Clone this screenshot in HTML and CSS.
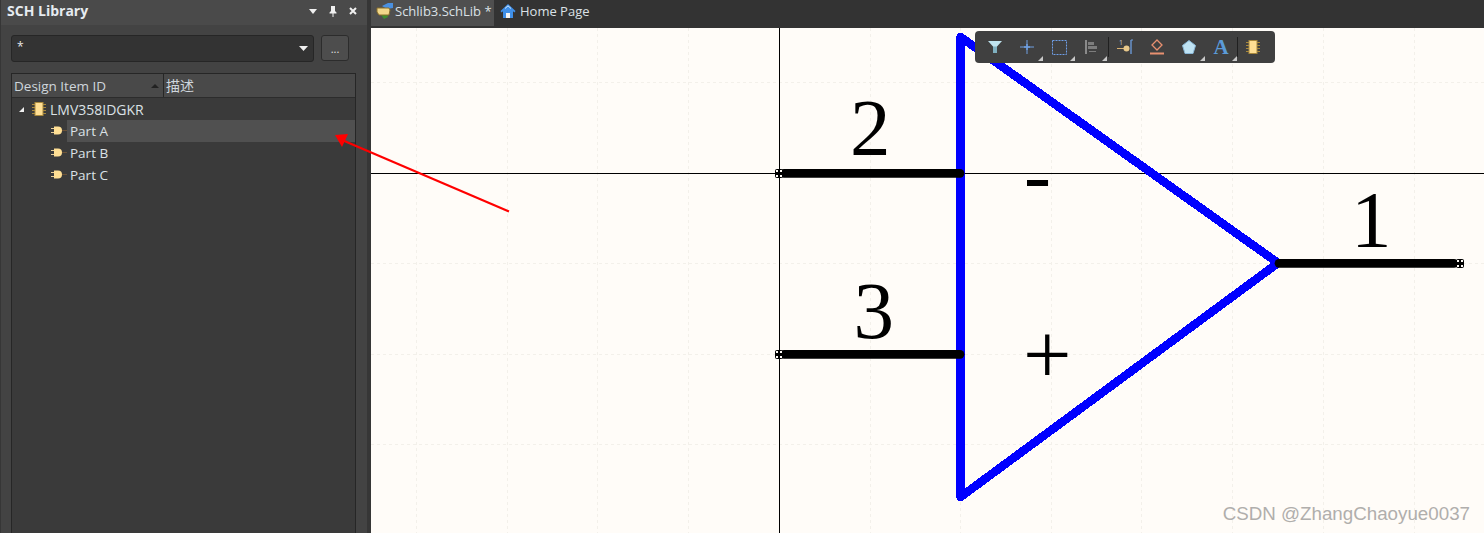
FILE: index.html
```html
<!DOCTYPE html>
<html lang="en">
  <head>
    <meta charset="UTF-8" />
    <title>Schlib3.SchLib</title>
    <link rel="stylesheet" href="styles.css">
  </head>
  <body>
    <div class="app">
      <div class="panel">
        <div class="panel-head">
          <span class="panel-title">SCH Library</span>
          <div class="panel-btns">
            <svg width="10" height="10" viewBox="0 0 10 10"><path d="M1 3h8L5 8z" fill="#f0f0f0"/></svg>
            <svg width="10" height="12" viewBox="0 0 10 12"><path d="M3 1h4v5l1.500 1.500v1H5.500V12h-1V8.500H1.500v-1L3 6z" fill="#f0f0f0"/></svg>
            <svg width="10" height="10" viewBox="0 0 10 10"><path d="M2 2l6 6M8 2L2 8" stroke="#f0f0f0" stroke-width="2"/></svg>
          </div>
        </div>
        <div class="panel-body">
          <div class="filter-row">
            <div class="filter">
              <span>*</span>
              <svg width="10" height="6" viewBox="0 0 10 6"><path d="M0 0h9L4.500 5z" fill="#f0f0f0"/></svg>
            </div>
            <div class="more">...</div>
          </div>
          <div class="tree">
            <div class="tree-head">
              <div class="col-id">
                <span>Design Item ID</span>
                <svg width="9" height="5" viewBox="0 0 9 5"><path d="M0 5h8L4 1z" fill="#222"/></svg>
              </div>
              <div class="col-desc">描述</div>
            </div>
            <div class="row row-top">
              <svg class="twist" width="7" height="7" viewBox="0 0 7 7"><path d="M6 1v5H1z" fill="#f0f0f0"/></svg>
              <svg class="chip" width="14" height="14" viewBox="0 0 14 14">
                <path d="M0 2.500h14M0 5.500h14M0 8.500h14M0 11.500h14" stroke="#a8883c"/>
                <rect x="3" y="0.500" width="8" height="13" fill="#ffdf94" stroke="#a8883c"/>
              </svg>
              <span>LMV358IDGKR</span>
            </div>
            <div class="row row-part">
              <svg class="gate" width="16" height="9" viewBox="0 0 16 9">
                <path d="M0 2.500h3M0 6.500h3" stroke="#e8cf98"/>
                <path d="M11 4.500h5" stroke="#6a5238"/>
                <path d="M3 0.500h4a4 4 0 0 1 0 8H3z" fill="#ffdf94"/>
              </svg>
              <span class="part-name sel">Part A</span>
            </div>
            <div class="row row-part">
              <svg class="gate" width="16" height="9" viewBox="0 0 16 9">
                <path d="M0 2.500h3M0 6.500h3" stroke="#e8cf98"/>
                <path d="M11 4.500h5" stroke="#6a5238"/>
                <path d="M3 0.500h4a4 4 0 0 1 0 8H3z" fill="#ffdf94"/>
              </svg>
              <span class="part-name">Part B</span>
            </div>
            <div class="row row-part">
              <svg class="gate" width="16" height="9" viewBox="0 0 16 9">
                <path d="M0 2.500h3M0 6.500h3" stroke="#e8cf98"/>
                <path d="M11 4.500h5" stroke="#6a5238"/>
                <path d="M3 0.500h4a4 4 0 0 1 0 8H3z" fill="#ffdf94"/>
              </svg>
              <span class="part-name">Part C</span>
            </div>
          </div>
        </div>
      </div>
      <div class="gutter"></div>
      <div class="main">
        <div class="tabs">
          <div class="tab active">
            <svg width="18" height="18" viewBox="0 0 18 18">
              <path d="M5 13l3 4 4-2-1-4z" fill="#3f8f2f"/>
              <path d="M6 4l6-3h5v5l-6 1z" fill="#4a90e0"/>
              <path d="M1 6h12l1 2-1 5H3l-2-3z" fill="#f2d88a" stroke="#8a6f2a"/>
            </svg>
            <span>Schlib3.SchLib *</span>
          </div>
          <div class="tab">
            <svg width="16" height="16" viewBox="0 0 16 16">
              <path d="M8 1L0.500 8l1 1.500L3 8.200V15h10V8.200l1.500 1.300 1-1.500z" fill="#3f8fe8"/>
              <path d="M6 15v-5h4v5z" fill="#f4f4f4"/>
              <path d="M5 5.500L8 2.800l3 2.700" fill="none" stroke="#d8ecff"/>
            </svg>
            <span>Home Page</span>
          </div>
        </div>
        <div class="canvas">
          <svg class="sheet" viewBox="371 28 1113 505" width="1113" height="505">
            <g class="grid">
              <path d="M416.500 28V533M507.500 28V533M597.500 28V533M688.500 28V533M870.500 28V533M960.500 28V533M1051.500 28V533M1141.500 28V533M1232.500 28V533M1323.500 28V533M1414.500 28V533"/>
              <path d="M371 82.500H1484M371 263.500H1484M371 354.500H1484M371 444.500H1484"/>
            </g>
            <path class="axis" d="M371 173.500H1484M779.500 28V533"/>
            <path class="body" d="M960.500 37L1278 263L960.500 497Z"/>
            <line class="pin" x1="784" y1="173.300" x2="960" y2="173.300"/>
            <line class="pin" x1="784" y1="354.300" x2="960" y2="354.300"/>
            <line class="pin" x1="1279" y1="263.300" x2="1454" y2="263.300"/>
            <g class="hot">
              <rect x="775" y="169" width="8" height="9" rx="2"/>
              <rect x="775" y="350" width="8" height="9" rx="2"/>
              <rect x="1456" y="259" width="8" height="9" rx="2"/>
            </g>
            <path class="hot-cell" d="M776 170h2v2h-2zM780 170h2v2h-2zM776 175h2v2h-2zM780 175h2v2h-2zM776 351h2v2h-2zM780 351h2v2h-2zM776 356h2v2h-2zM780 356h2v2h-2zM1457 260h2v2h-2zM1461 260h2v2h-2zM1457 265h2v2h-2zM1461 265h2v2h-2z"/>
            <text class="label" x="850" y="155">2</text>
            <text class="label" x="853.500" y="338">3</text>
            <text class="label" x="1351" y="247">1</text>
            <text class="label" x="1024" y="202">-</text>
            <text class="label plus" x="1023" y="384">+</text>
          </svg>
          <div class="mini-bar">
            <div class="tool">
              <svg width="16" height="14" viewBox="0 0 16 14"><path d="M1 1h14L10 6.500V13H6V6.500z" fill="#bfe3ee"/><path d="M6 6.500V13h4V6.500z" fill="#7fb0c0"/></svg>
            </div>
            <div class="tool corner">
              <svg width="14" height="14" viewBox="0 0 14 14"><path d="M7 0v14M0 7h14" stroke="#6f9fe0"/><path d="M7 4v6M4 7h6" stroke="#6f9fe0" stroke-width="1.500"/></svg>
            </div>
            <div class="tool corner">
              <svg width="15" height="15" viewBox="0 0 15 15"><rect x="0.500" y="0.500" width="14" height="14" fill="none" stroke="#6f9fe8" stroke-dasharray="2 1"/></svg>
            </div>
            <div class="tool corner">
              <svg width="14" height="14" viewBox="0 0 14 14"><path d="M1 0h2v14H1z" fill="#8a8a8a"/><path d="M4 2h6v3H4zM4 6h9v3H4zM5 11h7v1H5z" fill="#7d7d7d"/></svg>
            </div>
            <div class="sep"></div>
            <div class="tool">
              <svg width="16" height="16" viewBox="0 0 16 16">
                <path d="M0 9.500h8" stroke="#d8b070"/>
                <circle cx="9.500" cy="9.500" r="3" fill="#e8c88a"/>
                <path d="M14 1v14" stroke="#6f9fe0" stroke-width="1.300"/>
                <path d="M14 1h2" stroke="#6f9fe0"/>
                <text class="tiny" x="2" y="6">1</text>
              </svg>
            </div>
            <div class="tool">
              <svg width="14" height="16" viewBox="0 0 14 16"><path d="M7 1l5 5-5 5-5-5z" fill="none" stroke="#e89070" stroke-width="1.300"/><path d="M0 14.500h14" stroke="#e89070" stroke-width="2"/></svg>
            </div>
            <div class="tool corner">
              <svg width="14" height="14" viewBox="0 0 14 14"><path d="M7 0.500l6.500 5-2.500 8H3l-2.500-8z" fill="#bfe3f4" stroke="#8ab8d8"/></svg>
            </div>
            <div class="tool corner">
              <span class="tool-a">A</span>
            </div>
            <div class="sep"></div>
            <div class="tool">
              <svg width="14" height="14" viewBox="0 0 14 14">
                <path d="M0 2.500h14M0 5.500h14M0 8.500h14M0 11.500h14" stroke="#a8883c"/>
                <rect x="3" y="0.500" width="8" height="13" fill="#ffdf94" stroke="#a8883c"/>
              </svg>
            </div>
          </div>
          <div class="mark">CSDN @ZhangChaoyue0037</div>
        </div>
      </div>
      <svg class="arrow" width="1484" height="533" viewBox="0 0 1484 533">
        <path d="M509 211.500L342 140" stroke="#f00" stroke-width="2.200" fill="none"/>
        <path d="M335 135L348 134L342 147Z" fill="#f00"/>
      </svg>
    </div>
  </body>
</html>
```

FILE: styles.css
```css
* {
  padding: 0;
  margin: 0;
  box-sizing: border-box;
}
html,
body {
  height: 100%;
  overflow: hidden;
}
body {
  font-family: "Open Sans", "Noto Sans CJK SC", sans-serif;
  font-size: 13px;
  color: #dbe1e6;
  background-color: #363636;
}
svg {
  display: block;
  flex: none;
}
.app {
  position: relative;
  display: flex;
  height: 533px;
}
.panel {
  display: flex;
  flex-direction: column;
  width: 366px;
  margin-left: 1px;
  background-color: #434343;
}
.panel-head {
  display: flex;
  align-items: center;
  justify-content: space-between;
  height: 25px;
  padding: 0 9px 4px 6px;
  background-color: #4a4a4a;
}
.panel-title {
  font-size: 14px;
  font-weight: 700;
  color: #e6ebf0;
}
.panel-btns {
  display: flex;
  align-items: center;
  gap: 10px;
}
.panel-body {
  display: flex;
  flex-direction: column;
  flex: 1;
  padding: 10px 10px 0;
}
.filter-row {
  display: flex;
  gap: 7px;
  margin-bottom: 11px;
}
.filter {
  display: flex;
  align-items: center;
  justify-content: space-between;
  width: 303px;
  height: 27px;
  padding: 0 4px 0 5px;
  background-color: #333333;
  border: 1px solid #262626;
  border-radius: 3px;
  font-size: 12px;
  color: #e8e8e8;
}
.filter span {
  margin-top: -4px;
}
.more {
  width: 28px;
  height: 26px;
  background-color: #4d4d4d;
  border: 1px solid #2c2c2c;
  border-radius: 3px;
  text-align: center;
  font-size: 11px;
  line-height: 26px;
  color: #e0e0e0;
}
.tree {
  flex: 1;
  width: 345px;
  background-color: #3a3a3a;
  border: 1px solid #262626;
  border-bottom: 0;
  font-size: 14px;
}
.tree-head {
  display: flex;
  align-items: center;
  height: 24px;
  background-color: #494949;
  border-bottom: 1px solid #2c2c2c;
  font-size: 13.500px;
  color: #cfd6dc;
}
.col-id {
  display: flex;
  align-items: center;
  justify-content: space-between;
  width: 152px;
  height: 100%;
  padding: 0 3px 0 2px;
  border-right: 1px solid #262626;
}
.col-desc {
  padding-left: 2px;
  font-size: 14px;
  margin-top: -1px;
}
.row {
  display: flex;
  align-items: center;
  height: 22px;
}
.row-top {
  padding-left: 6px;
}
.twist {
  margin-right: 7px;
}
.chip {
  margin-right: 4px;
}
.row-part {
  padding-left: 39px;
}
.gate {
  margin-top: -1px;
}
.part-name {
  display: block;
  flex: 1;
  height: 22px;
  padding-left: 3px;
  font-size: 13.500px;
  line-height: 23px;
}
.sel {
  background-color: #505050;
}
.gutter {
  width: 4px;
  background-color: #363636;
}
.main {
  display: flex;
  flex-direction: column;
  flex: 1;
}
.tabs {
  display: flex;
  height: 28px;
  background-color: #333333;
}
.tab {
  display: flex;
  align-items: center;
  gap: 3px;
  height: 26px;
  padding: 0 5px 4px;
}
.tab.active {
  gap: 1px;
  width: 123px;
  background-color: #4f4f4f;
  white-space: nowrap;
}
.tab:last-child {
  padding-left: 6px;
  gap: 4px;
}
.canvas {
  position: relative;
  flex: 1;
  background-color: #fffcf8;
  overflow: hidden;
}
.grid path {
  fill: none;
  stroke: #f3f0ea;
  stroke-dasharray: 3 3;
}
.axis {
  fill: none;
  stroke: #000;
}
.body {
  fill: none;
  stroke: #0000ff;
  stroke-width: 8.500;
  stroke-linejoin: round;
  shape-rendering: crispEdges;
}
.pin {
  stroke: #000;
  stroke-width: 8.700;
  stroke-linecap: round;
}
.hot rect {
  fill: #000;
}
.hot-cell {
  fill: #fffcf8;
}
.label {
  font-family: "Liberation Serif", serif;
  font-size: 81px;
  fill: #000;
}
.plus {
  font-size: 86px;
}
.mini-bar {
  position: absolute;
  left: 604px;
  top: 3px;
  display: flex;
  align-items: center;
  width: 300px;
  height: 32px;
  padding-left: 4px;
  background-color: #404040;
  border-radius: 4px;
}
.tool {
  position: relative;
  display: flex;
  align-items: center;
  justify-content: center;
  width: 32px;
  height: 32px;
}
.mini-bar .sep:nth-child(5) {
  margin-left: 1px;
}
.mini-bar .sep:nth-child(10) {
  margin-right: -1px;
}
.corner::after {
  content: "";
  position: absolute;
  right: 0;
  bottom: 2px;
  border-style: solid;
  border-width: 0 0 5px 5px;
  border-color: transparent transparent #c8c8c8 transparent;
}
.sep {
  width: 1px;
  height: 20px;
  background-color: #202020;
}
.tiny {
  font-family: "Open Sans", sans-serif;
  font-size: 7px;
  fill: #c8c8c8;
}
.tool-a {
  font-family: "Liberation Serif", serif;
  font-size: 21px;
  font-weight: 700;
  color: #5b9bd8;
}
.mark {
  position: absolute;
  right: 14px;
  bottom: 8px;
  font-family: "Liberation Sans", sans-serif;
  font-size: 18.750px;
  color: #b0aeac;
}
.arrow {
  position: absolute;
  left: 0;
  top: 0;
  pointer-events: none;
}
```
